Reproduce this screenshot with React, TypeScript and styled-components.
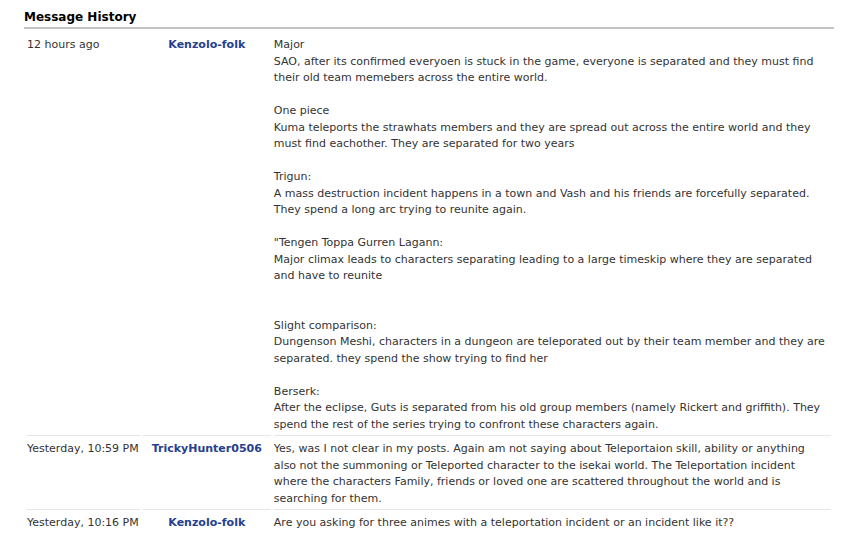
import React from "react";
import styled, { createGlobalStyle } from "styled-components";

const Global = createGlobalStyle`
  html, body { margin: 0; padding: 0; background: #ffffff; }
  body { font-family: "DejaVu Sans", Verdana, sans-serif; }
`;

const Page = styled.div`
  padding: 8px 19px 0 24px;
`;

const Title = styled.h2`
  margin: 0;
  font-size: 12px;
  font-weight: bold;
  color: #000;
  line-height: 18px;
  padding-bottom: 1px;
  border-bottom: 2px solid #c4c4c4;
`;

const Table = styled.table`
  width: 100%;
  border-collapse: separate;
  border-spacing: 3px 0;
  margin-top: 4px;
  font-size: 11px;
  line-height: 16.5px;
  color: #333;
`;

const Row = styled.tr<{ $first?: boolean }>`
  & > td {
    border-top: ${(p) => (p.$first ? "none" : "1px solid #e6e6e6")};
    padding-top: ${(p) => (p.$first ? "4px" : "5px")};
    padding-bottom: 2px;
    vertical-align: top;
  }
`;

const DateCell = styled.td`
  white-space: nowrap;
  color: #333;
  padding-left: 0;
  padding-right: 1px;
`;

const UserCell = styled.td`
  white-space: nowrap;
  text-align: center;
  font-weight: bold;
  color: #24408f;
  padding-left: 9px;
  padding-right: 9px;
`;

const MsgCell = styled.td`
  width: 100%;
  color: #333;
  white-space: pre-wrap;
  padding-left: 0;
  padding-right: 4px;
`;

const messages = [
  {
    date: "12 hours ago",
    user: "Kenzolo-folk",
    text: `Major
SAO, after its confirmed everyoen is stuck in the game, everyone is separated and they must find their old team memebers across the entire world.

One piece
Kuma teleports the strawhats members and they are spread out across the entire world and they must find eachother. They are separated for two years

Trigun:
A mass destruction incident happens in a town and Vash and his friends are forcefully separated. They spend a long arc trying to reunite again.

"Tengen Toppa Gurren Lagann:
Major climax leads to characters separating leading to a large timeskip where they are separated and have to reunite


Slight comparison:
Dungenson Meshi, characters in a dungeon are teleporated out by their team member and they are separated. they spend the show trying to find her

Berserk:
After the eclipse, Guts is separated from his old group members (namely Rickert and griffith). They spend the rest of the series trying to confront these characters again.`,
  },
  {
    date: "Yesterday, 10:59 PM",
    user: "TrickyHunter0506",
    text: "Yes, was I not clear in my posts. Again am not saying about Teleportaion skill, ability or anything also not the summoning or Teleported character to the isekai world. The Teleportation incident where the characters Family, friends or loved one are scattered throughout the world and is searching for them.",
  },
  {
    date: "Yesterday, 10:16 PM",
    user: "Kenzolo-folk",
    text: "Are you asking for three animes with a teleportation incident or an incident like it??",
  },
];

export default function App() {
  return (
    <>
      <Global />
      <Page>
        <Title>Message History</Title>
        <Table>
          <tbody>
            {messages.map((m, i) => (
              <Row key={i} $first={i === 0}>
                <DateCell>{m.date}</DateCell>
                <UserCell>{m.user}</UserCell>
                <MsgCell>{m.text}</MsgCell>
              </Row>
            ))}
          </tbody>
        </Table>
      </Page>
    </>
  );
}
